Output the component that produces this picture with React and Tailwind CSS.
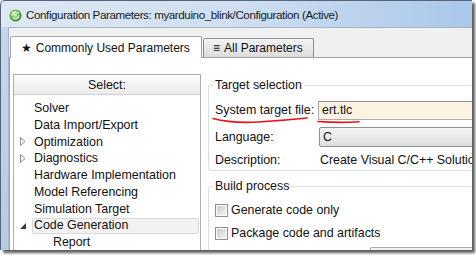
import React from "react";

const items = [
  { label: "Solver" },
  { label: "Data Import/Export" },
  { label: "Optimization", arrow: "closed" },
  { label: "Diagnostics", arrow: "closed" },
  { label: "Hardware Implementation" },
  { label: "Model Referencing" },
  { label: "Simulation Target" },
  { label: "Code Generation", arrow: "open", selected: true },
  { label: "Report", child: true },
];

function Arrow({ kind }) {
  if (kind === "closed")
    return (
      <svg width="6" height="9" viewBox="0 0 6 9">
        <path d="M0.5 0.5 L5 4.5 L0.5 8.5 Z" fill="#fff" stroke="#8f8f8f" strokeWidth="1" />
      </svg>
    );
  if (kind === "open")
    return (
      <svg width="6" height="6" viewBox="0 0 6 6">
        <path d="M6 0 L6 6 L0 6 Z" fill="#3c3c3c" />
      </svg>
    );
  return null;
}

function TitleIcon() {
  return (
    <svg width="13" height="13" viewBox="0 0 13 13">
      <defs>
        <radialGradient id="g1" cx="0.4" cy="0.35" r="0.7">
          <stop offset="0" stopColor="#b6e59a" />
          <stop offset="0.6" stopColor="#5cae45" />
          <stop offset="1" stopColor="#2e7d28" />
        </radialGradient>
      </defs>
      <circle cx="6.5" cy="6.5" r="6" fill="url(#g1)" />
      <path d="M3.2 6.5 A3.3 3.3 0 0 1 9.3 4.8" fill="none" stroke="#eaf8e0" strokeWidth="1.4" />
      <path d="M9.8 6.5 A3.3 3.3 0 0 1 3.7 8.2" fill="none" stroke="#eaf8e0" strokeWidth="1.4" />
      <circle cx="6.5" cy="6.5" r="1.3" fill="#e4f6d8" />
    </svg>
  );
}

function Checkbox() {
  return (
    <div className="w-[13px] h-[13px] shrink-0 border border-[#8e8f8f] bg-white p-[1px]">
      <div className="w-full h-full bg-gradient-to-br from-[#cbcbcb] to-[#f4f4f4]" />
    </div>
  );
}

export default function App() {
  return (
    <div className="relative w-[476px] h-[255px] bg-white font-['Liberation_Sans',Arial,sans-serif] text-[#111]">
      <div className="w-[472px] h-[250px] flex flex-col overflow-hidden border-t border-l border-[#56657a] rounded-tl-[5px] bg-[#c4d6eb] shadow-[3px_3px_3px_rgba(0,0,0,0.65)]">
        {/* title bar */}
        <div className="h-[26px] shrink-0 flex items-center pl-[8px] pt-[2px] gap-[4px] bg-gradient-to-r from-[#dde8f4] via-[#cfdff1] to-[#a9c7ea]">
          <TitleIcon />
          <span className="text-[11.6px] tracking-[-0.4px] text-[#1b1b1b] whitespace-nowrap">
            Configuration Parameters: myarduino_blink/Configuration (Active)
          </span>
        </div>

        <div className="flex-1 flex min-h-0">
          <div className="w-[7px] shrink-0 bg-gradient-to-b from-[#c3d6ec] to-[#b5cbe5]" />
          <div className="flex-1 min-w-0 flex flex-col bg-[#f0f0f0] border-t border-l border-[#a8b5c4]">
            {/* tabs */}
            <div className="h-[29px] shrink-0 flex items-end">
              <div className="relative z-10 ml-[1px] -mb-[1px] w-[192px] h-[22px] flex items-center pl-[10px] gap-[4px] bg-white border-t border-l border-r border-[#a3a3a3] rounded-t-[2px]">
                <span className="font-['DejaVu_Sans',sans-serif] text-[12px] leading-none">★</span>
                <span className="text-[12px] whitespace-nowrap">Commonly Used Parameters</span>
              </div>
              <div className="ml-[1px] w-[111px] h-[19px] flex items-center pl-[9px] gap-[4px] bg-gradient-to-b from-[#f4f4f4] to-[#dcdcdc] border-t border-l border-r border-[#8e8f8f] rounded-t-[2px]">
                <span className="text-[12px] leading-none">≡</span>
                <span className="text-[12px] whitespace-nowrap">All Parameters</span>
              </div>
            </div>

            {/* page */}
            <div className="flex-1 min-h-0 flex items-start overflow-hidden bg-white border-t border-l border-[#a3a3a3] text-[12.4px]">
              {/* left tree */}
              <div className="ml-[3px] mt-[16px] w-[188px] h-[190px] shrink-0 border border-[#afafaf]">
                <div className="h-[20px] flex items-center justify-center pt-[2px] border-b border-[#d3d3d3] bg-gradient-to-b from-[#fbfbfb] to-[#ebebeb]">
                  Select:
                </div>
                <div className="pt-[5px]">
                  {items.map((it) => (
                    <div key={it.label} className="h-[16.75px] flex items-center">
                      <div className="w-[18px] shrink-0 flex items-center pl-[6px]">
                        <Arrow kind={it.arrow} />
                      </div>
                      <div
                        className={
                          it.selected
                            ? "flex-1 mr-[1px] h-[16px] flex items-center px-[1px] rounded-[2px] border border-[#d9d9d9] bg-[#f2f2f2]"
                            : "flex-1 mr-[1px] h-[16px] flex items-center px-[1px] border border-transparent " +
                              (it.child ? "pl-[20px]" : "")
                        }
                      >
                        {it.label}
                      </div>
                    </div>
                  ))}
                </div>
              </div>

              {/* right panel */}
              <div className="flex-1 min-w-0 overflow-hidden pl-[7px] mt-[19px]">
                <fieldset className="w-[320px] border border-[#d5dfe5] rounded-[3px] pl-[4px] pb-[2px]">
                  <legend className="px-[2px] leading-[16px]">Target selection</legend>
                  <div className="pl-[2px]">
                    <div className="mt-[8px] h-[19px] flex items-center">
                      <div className="w-[103px] shrink-0">System target file:</div>
                      <div className="w-[200px] h-[19px] flex items-center pl-[3px] bg-[#fdf3e3] border border-[#abadb3] border-t-[#8f9399]">
                        ert.tlc
                      </div>
                    </div>
                    <div className="mt-[7px] h-[20px] flex items-center">
                      <div className="w-[104px] shrink-0">Language:</div>
                      <div className="w-[200px] h-[20px] flex items-center pl-[3px] rounded-[2px] border border-[#8e8f8f] bg-gradient-to-b from-[#f5f5f5] to-[#dedede]">
                        C
                      </div>
                    </div>
                    <div className="mt-[5px] h-[16px] flex items-center whitespace-nowrap">
                      <div className="w-[105px] shrink-0">Description:</div>
                      <div>Create Visual C/C++ Solution File for Simulink Coder</div>
                    </div>
                  </div>
                </fieldset>

                <fieldset className="mt-[7px] w-[320px] h-[90px] border border-[#d5dfe5] rounded-[3px] pl-[4px]">
                  <legend className="px-[2px] leading-[16px]">Build process</legend>
                  <div className="pl-[2px]">
                    <div className="mt-[10px] h-[13px] flex items-center gap-[3px]">
                      <Checkbox />
                      <span className="whitespace-nowrap">Generate code only</span>
                    </div>
                    <div className="mt-[10px] h-[13px] flex items-center gap-[3px]">
                      <Checkbox />
                      <span className="whitespace-nowrap">Package code and artifacts</span>
                    </div>
                    <div className="mt-[7px] ml-[155px] w-[160px] h-[12px] border-t border-l border-[#acacac] rounded-tl-[2px] bg-[#f4f4f4]" />
                  </div>
                </fieldset>
              </div>
            </div>
          </div>
        </div>
      </div>

      {/* red hand-drawn annotations */}
      <svg className="absolute left-0 top-0 pointer-events-none" width="476" height="255" viewBox="0 0 476 255">
        <path d="M213 118.5 Q232 123.5 258 122 T307 118" fill="none" stroke="#e8121c" strokeWidth="1.6" strokeLinecap="round" />
        <path d="M318 121.5 Q338 123 359 121.8" fill="none" stroke="#e8121c" strokeWidth="1.6" strokeLinecap="round" />
      </svg>
    </div>
  );
}
